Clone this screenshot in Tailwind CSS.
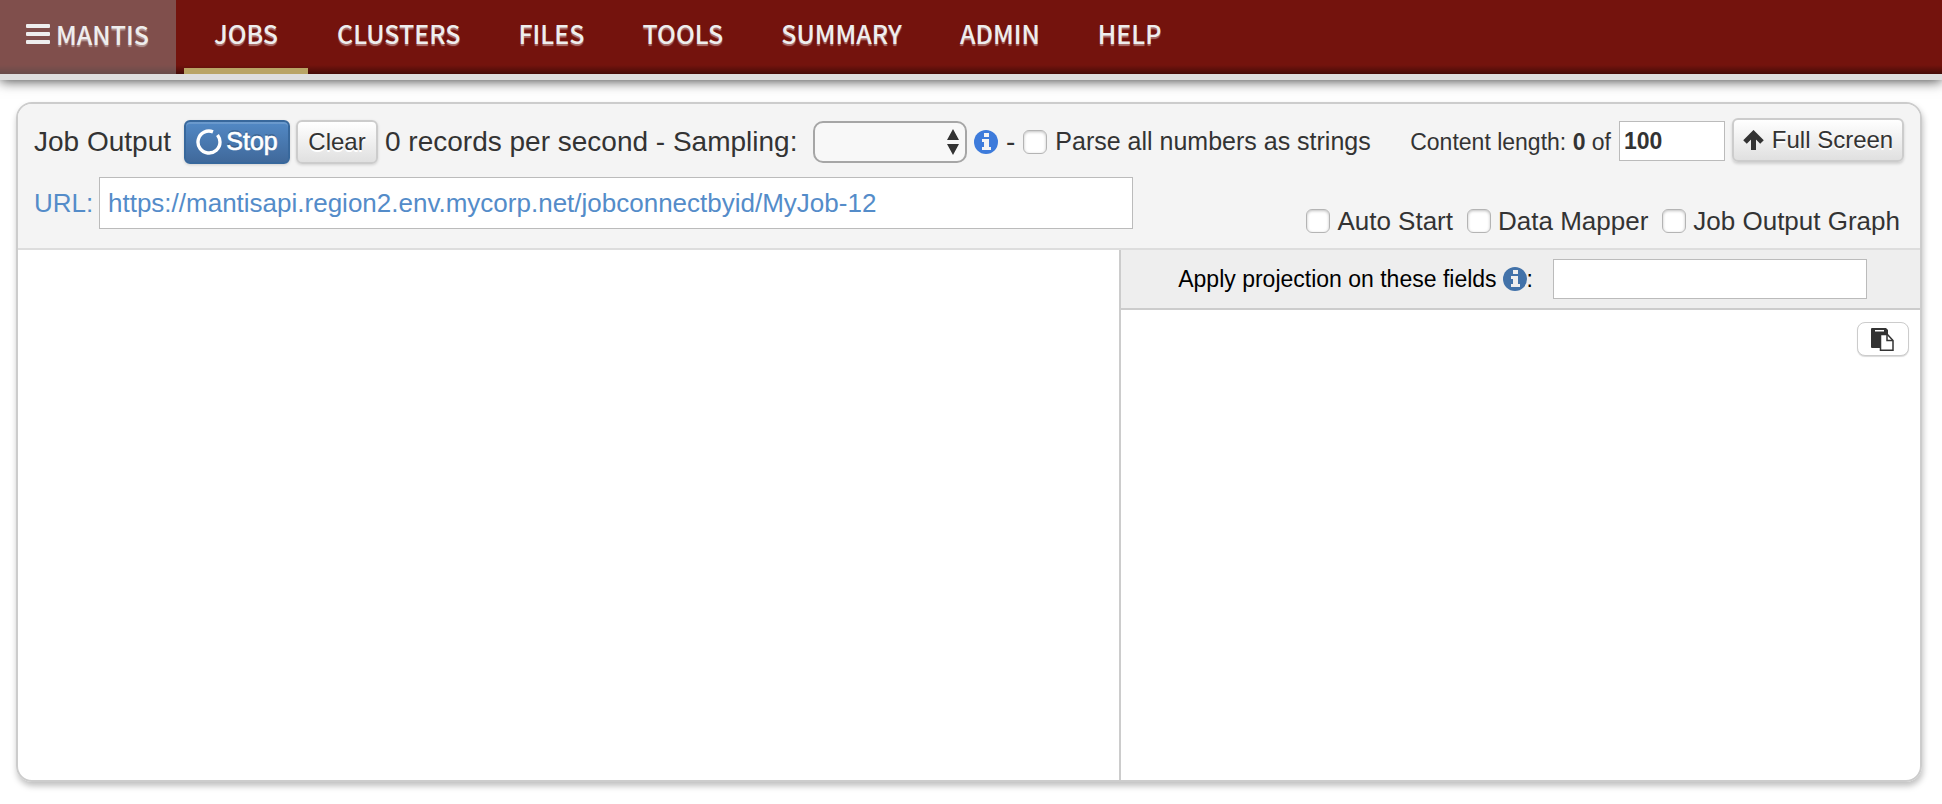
<!DOCTYPE html>
<html lang="en">
<head>
<meta charset="utf-8">
<title>Mantis - Job Output</title>
<script src="https://cdn.jsdelivr.net/npm/@tailwindcss/browser@4"></script>
</head>
<body class="flex min-h-screen flex-col bg-white font-['Liberation_Sans',Arial,sans-serif] text-[#333]">
  <header class="border-b-[6px] border-[#dedede] bg-[#74130d] shadow-[0_1px_12px_rgba(0,0,0,0.75)]">
    <nav class="flex h-[74px] gap-2 bg-linear-to-t from-black/40 to-transparent to-[9px] font-['Noto_Sans_CJK_SC','Open_Sans',sans-serif] text-[25px] leading-[66px] font-medium text-[#eee] [text-shadow:0_2px_1px_rgba(255,255,255,0.4)]">
      <a href="#" class="flex w-44 items-center gap-1.5 bg-[#8c8c8c]/50 pb-1.5 pl-[26px]">
        <svg class="h-5 w-6 shrink-0" viewBox="0 0 24 20" fill="currentColor" aria-hidden="true"><rect width="24" height="4" rx="1"/><rect y="8" width="24" height="4" rx="1"/><rect y="16" width="24" height="4" rx="1"/></svg>
        MANTIS
      </a>
      <div class="flex">
        <a href="#" class="border-b-[6px] border-[#b9a465] px-[30px]">JOBS</a>
        <a href="#" class="px-[29px]">CLUSTERS</a>
        <a href="#" class="px-[29px]">FILES</a>
        <a href="#" class="px-[29px]">TOOLS</a>
        <a href="#" class="px-[29px]">SUMMARY</a>
        <a href="#" class="px-[29px]">ADMIN</a>
        <a href="#" class="px-[29px]">HELP</a>
      </div>
    </nav>
  </header>

  <main class="mx-4 mt-[22px] mr-5 mb-[22px] flex flex-1 flex-col overflow-hidden rounded-2xl border-2 border-[#ccc] shadow-[1px_4px_6px_rgba(0,0,0,0.25)]">
    <section class="border-b-2 border-[#ddd] bg-[#f4f4f4] px-4 pb-[11px]">
      <div class="flex justify-between pt-[14px]">
        <div class="flex h-12 items-center text-[28px]">
          <h1 class="mr-2 w-[142px] whitespace-nowrap">Job Output</h1>
          <button type="button" class="mr-1.5 flex h-11 w-[106px] items-center justify-center gap-1 rounded-md border-2 border-[#38689c] bg-linear-to-b from-[#5289c5] to-[#40699b] text-[25px] font-medium text-white shadow-[inset_0_2px_0_rgba(255,255,255,0.15),0_1px_3px_rgba(0,0,0,0.15)] [text-shadow:0_-2px_0_rgba(0,0,0,0.2)] [-webkit-text-stroke:0.6px_white]">
            <svg class="size-[26px]" viewBox="0 0 26 26" fill="none" stroke="currentColor" stroke-width="3.400" aria-hidden="true"><path d="M17 2.800A11 11 0 1 0 24 13C24 10.500 23 8 21.500 6"/></svg>
            Stop
          </button>
          <button type="button" class="mr-[7px] h-11 w-[82px] rounded-md border-2 border-[#ccc] bg-linear-to-b from-white to-[#e0e0e0] text-[24px] shadow-[0_1px_3px_rgba(0,0,0,0.15)] [text-shadow:0_2px_0_white]">Clear</button>
          <label for="sampling" class="mr-2 w-[420px] whitespace-nowrap">0 records per second - Sampling:</label>
          <div class="relative mr-[7px]">
            <select id="sampling" class="block h-[42px] w-[154px] appearance-none rounded-[10px] border-2 border-[#a6a6a6] bg-[#f8f8f8]"><option></option></select>
            <svg class="pointer-events-none absolute top-2 right-2 h-[26px] w-3" viewBox="0 0 12 26" fill="#333" aria-hidden="true"><path d="M6 0 12 11H0ZM0 15H12L6 26Z"/></svg>
          </div>
          <svg class="mr-2 size-6" viewBox="0 0 24 24" aria-label="Sampling info" role="img"><circle cx="12" cy="12" r="12" fill="#3d7bdb"/><path fill="#f4f4f4" d="M10 3h5v4h-5ZM8 9h7v8h2v3H8v-3h2v-5H8Z"/></svg>
          <span class="mr-2">-</span>
          <label class="flex items-center gap-2 text-[25px] whitespace-nowrap">
            <input type="checkbox" class="size-6 appearance-none rounded-md border border-[#b4b4b4] bg-white shadow-[inset_0_1px_3px_rgba(0,0,0,0.25)]">
            Parse all numbers as strings
          </label>
        </div>
        <div class="flex items-start">
          <label for="length" class="mt-[10px] mr-2 text-[23px] leading-7 whitespace-nowrap">Content length: <b>0</b> of</label>
          <input id="length" type="text" value="100" class="mt-[3px] mr-[7px] h-10 w-[106px] border border-[#bbb] bg-white px-1 text-[23px] font-bold">
          <button type="button" class="flex h-11 w-[172px] items-center justify-center gap-2 rounded-md border-2 border-[#ccc] bg-linear-to-b from-white to-[#e0e0e0] text-[24px] whitespace-nowrap shadow-[0_2px_3px_rgba(0,0,0,0.15)] [text-shadow:0_2px_0_white]">
            <svg class="h-5 w-[21px] shrink-0" viewBox="0 0 21 20" fill="none" stroke="currentColor" stroke-width="5" aria-hidden="true"><path d="M10.500 20V4M2 12l8.500-8.500L19 12"/></svg>
            Full Screen
          </button>
        </div>
      </div>
      <div class="mt-[11px] flex items-end justify-between">
        <div class="mb-2 flex items-center text-[26px] text-[#548cc9]">
          <label for="url" class="mr-2 w-[57px]">URL:</label>
          <input id="url" type="text" value="https://mantisapi.region2.env.mycorp.net/jobconnectbyid/MyJob-12" class="h-[52px] w-[1034px] border border-[#bbb] bg-white px-2">
        </div>
        <div class="mr-1 flex gap-[14px] text-[26px] leading-8 whitespace-nowrap">
          <label class="flex items-center gap-[7px]"><input type="checkbox" class="size-6 appearance-none rounded-md border border-[#b4b4b4] bg-white shadow-[inset_0_1px_3px_rgba(0,0,0,0.25)]">Auto Start</label>
          <label class="flex items-center gap-[7px]"><input type="checkbox" class="size-6 appearance-none rounded-md border border-[#b4b4b4] bg-white shadow-[inset_0_1px_3px_rgba(0,0,0,0.25)]">Data Mapper</label>
          <label class="flex items-center gap-[7px]"><input type="checkbox" class="size-6 appearance-none rounded-md border border-[#b4b4b4] bg-white shadow-[inset_0_1px_3px_rgba(0,0,0,0.25)]">Job Output Graph</label>
        </div>
      </div>
    </section>

    <div class="grid flex-1 grid-cols-[579fr_421fr]">
      <section aria-label="Output"></section>
      <section aria-label="Projection" class="border-l-2 border-[#ccc]">
        <div class="flex h-[60px] items-center justify-end border-b-2 border-[#ccc] bg-[#eee] pr-[53px] text-black">
          <label for="projection" class="mr-5 flex items-center text-[23px] whitespace-nowrap">
            Apply projection on these fields
            <svg class="ml-1.5 size-6" viewBox="0 0 24 24" aria-hidden="true"><circle cx="12" cy="12" r="12" fill="#4272a9"/><path fill="#eee" d="M10 3h5v4h-5ZM8 9h7v8h2v3H8v-3h2v-5H8Z"/></svg>:
          </label>
          <input id="projection" type="text" class="h-10 w-[314px] border border-[#bbb] bg-white px-2 text-[23px]">
        </div>
        <div class="flex justify-end pt-3 pr-[11px]">
          <button type="button" aria-label="Copy" class="flex h-[34px] w-[52px] items-center justify-center rounded-lg border border-[#ccc] bg-white shadow-[0_1px_1px_rgba(0,0,0,0.15)]">
            <svg class="size-[23px]" viewBox="0 0 23 23" aria-hidden="true"><path fill="#333" d="M1 0h14l2 2v5H10v13H1a1 1 0 0 1-1-1V1a1 1 0 0 1 1-1Z"/><path fill="#fff" d="M4 2h9v1.500H4Z"/><path fill="#fff" stroke="#333" stroke-width="1.500" d="M9.500 6.500h7l5.500 6v9.700H9.500Z"/><path fill="none" stroke="#333" stroke-width="1.500" d="M16 6.500v6h6"/></svg>
          </button>
        </div>
      </section>
    </div>
  </main>
</body>
</html>
